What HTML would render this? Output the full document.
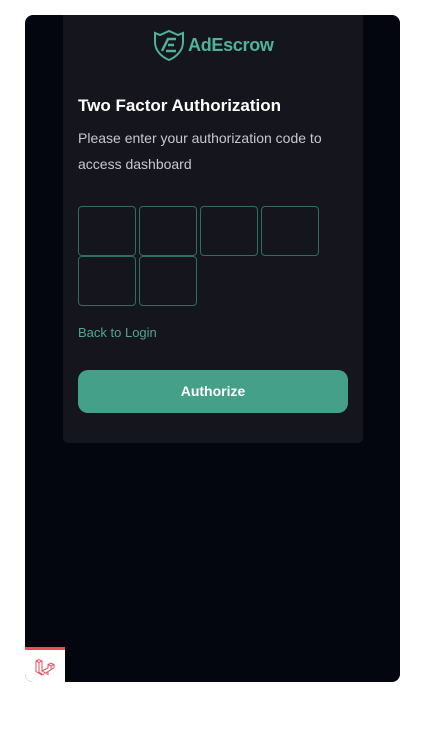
<!DOCTYPE html>
<html><head><style>
body{margin:0;width:445px;height:729px;background:#fff;font-family:"Liberation Sans",sans-serif;position:relative;overflow:hidden}
.outer{position:absolute;left:25px;top:15px;width:375px;height:667px;background:#03050f;border-radius:8px;overflow:hidden}
.inner{position:absolute;left:38px;top:0;width:300px;height:428px;background:#14151d;border-radius:0 0 5px 5px}
.logo{position:absolute;left:89px;top:13px;display:flex;align-items:center;color:#4fb39a;font-size:18px;font-weight:bold;letter-spacing:-0.3px}
h1{position:absolute;left:15px;top:81px;margin:0;color:#fff;font-size:17px;font-weight:bold}
p{position:absolute;left:15px;top:110px;margin:0;color:#c8c9cf;font-size:14px;line-height:26px;width:280px}
.box{position:absolute;width:56px;height:48px;border:1px solid #2f6e62;border-radius:4px}
.back{position:absolute;left:15px;top:310px;color:#4fa88f;font-size:13px}
.btn{position:absolute;left:15px;top:355px;width:270px;height:43px;background:#45a08a;border-radius:10px;color:#fff;font-weight:bold;font-size:14px;text-align:center;line-height:43px}
.lv{position:absolute;left:0;top:632px;width:40px;height:35px;background:#fff;border-top:3px solid #e3515b;box-sizing:border-box;border-radius:0 0 0 8px}
</style></head><body>
<div class="outer">
<div class="inner">
<div class="logo"><svg width="34" height="34" viewBox="0 0 34 34" fill="none" stroke="#4fb39a" stroke-width="2"><path d="M17 3 L8 7 L3 5 L3 14 C3 23 10 29 17 32 C24 29 31 23 31 14 L31 5 L26 7 Z"/><path d="M10 23 L16 11 L24 11 M16 17 L22 17 M14 23 L24 23" stroke-width="2.5"/></svg><span style="margin-left:2px">AdEscrow</span></div>
<h1>Two Factor Authorization</h1>
<p>Please enter your authorization code to access dashboard</p>
<div class="box" style="left:15px;top:191px"></div>
<div class="box" style="left:76px;top:191px"></div>
<div class="box" style="left:137px;top:191px"></div>
<div class="box" style="left:198px;top:191px"></div>
<div class="box" style="left:15px;top:241px"></div>
<div class="box" style="left:76px;top:241px"></div>
<div class="back">Back to Login</div>
<div class="btn">Authorize</div>
</div>
<div class="lv"><svg width="22" height="22" viewBox="0 0 22 22" style="position:absolute;left:9px;top:6px" fill="none" stroke="#e3515b" stroke-width="1"><path d="M2 5 L5 3.5 L8 5 V15 L14 12 V8.5 L17 7 L20 8.5 V12 L14 15.5 L8 19 L2 15.5 Z M2 5 L5 6.5 L8 5 M5 6.5 V16 L8 18 M14 8.5 L17 10 L20 8.5 M17 10 V13.5 M8 15 L14 18.5 V15.5"/></svg></div>
</div>
</body></html>
